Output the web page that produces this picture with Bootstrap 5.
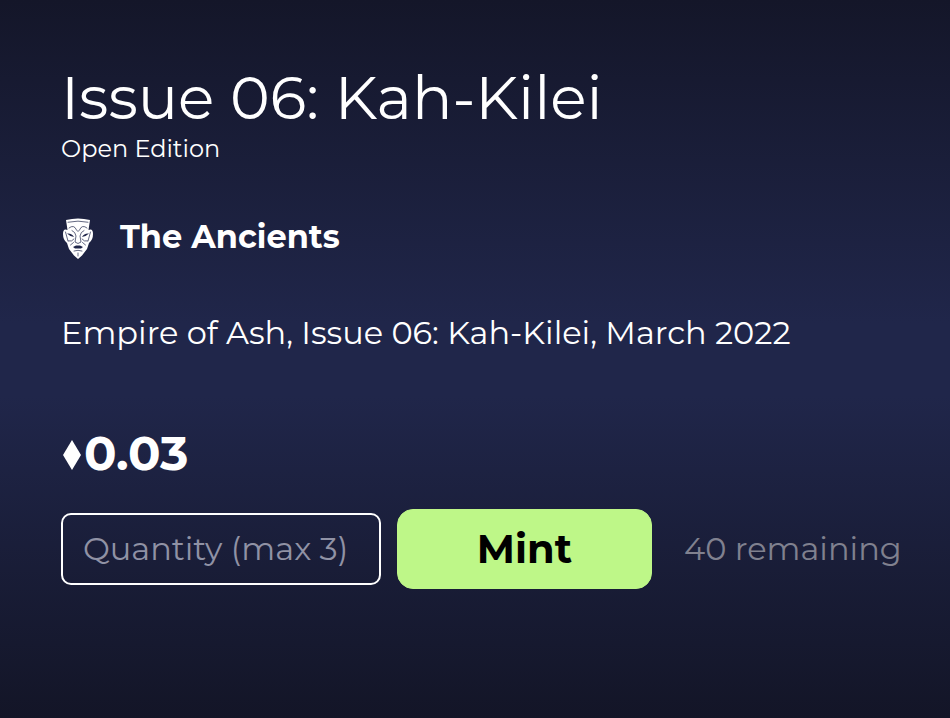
<!DOCTYPE html>
<html lang="en">
<head>
<meta charset="utf-8">
<meta name="viewport" content="width=device-width, initial-scale=1">
<title>Issue 06: Kah-Kilei</title>
<link href="https://cdn.jsdelivr.net/npm/bootstrap@5.3.0/dist/css/bootstrap.min.css" rel="stylesheet">
<style>
  body {
    background: linear-gradient(#141629, #20264a 45%, #20264a 55%, #131527);
    color: #fff;
    font-family: Montserrat, Inter, "Open Sans", sans-serif;
  }
  .mint-panel { padding: 64px 48px 64px 61px; }
  .issue-title { font-size: 60px; line-height: 68px; font-weight: 400; }
  .edition { font-size: 24px; line-height: 34px; }
  .artist { font-size: 32px; line-height: 48px; gap: 26px; margin-top: 47px; }
  .artist:hover { color: #bef788; }
  .summary { font-size: 32px; line-height: 48px; margin-top: 48px; }
  .price { font-size: 48px; line-height: 64px; margin-top: 64px; gap: 3px; }
  .mint-row { gap: 16px; margin-top: 24px; }
  .qty-field { flex: 0 1 320px; min-width: 0; }
  .qty-input, .qty-input:focus {
    height: 72px; padding: 0 20px 2px; font-size: 32px; line-height: 48px;
    color: #fff; background: transparent; border: 2px solid #fff; border-radius: 10px;
  }
  .qty-input::placeholder { color: #9092a5; opacity: 1; }
  .mint-btn {
    flex: 0 1 255px; height: 80px; font-size: 40px; line-height: 48px; border-radius: 16px;
    --bs-btn-bg: #bef788; --bs-btn-color: #000; --bs-btn-border-color: #bef788;
    --bs-btn-hover-bg: #adea74; --bs-btn-hover-color: #000;
  }
  .remaining { font-size: 32px; color: #80818f; margin-left: 16px; }
</style>
</head>
<body class="min-vh-100">
<main class="mint-panel">
  <h1 class="issue-title mb-0">Issue 06: Kah-Kilei</h1>
  <p class="edition mb-0">Open Edition</p>

  <a href="#" class="artist d-flex align-items-center fw-bold text-white text-decoration-none">
    <svg class="mt-1" width="33" height="42" viewBox="0 0 33 42" aria-hidden="true">
      <path fill="#fff" d="M5 2Q17-1 29 2L27.500 12Q32 10 32 16Q32 22 28 25L26 31L21 37.500L17 41L13 37.500L8 31L6 25Q2 22 2 16Q2 10 6.500 12Z"/>
      <g fill="none" stroke="#20264a" stroke-width=".7" stroke-linecap="round">
        <path d="M7 4.200Q17 2 27 4.200"/>
        <path d="M8 10Q13 6 15.500 12Q17 15 18.500 12Q21 6 26 10M11 12.500Q14.500 14 15 18L14 24Q17 27 20 24L19 18Q19.500 14 23 12.500"/>
        <path d="M4.500 14L7 23M29.500 14L27 23M7.500 23Q11 24 13 21M26.500 23Q23 24 21 21M9.500 27L12.500 24.500M24.500 27L21.500 24.500M13 33Q17 31.500 21 33M17 35V38"/>
      </g>
      <path fill="#20264a" d="M6 15.500Q11 15 13 19Q9 18.500 6 15.500ZM28 15.500Q23 15 21 19Q25 18.500 28 15.500ZM12 29L15 27.500H19L22 29L20 30.500H14Z"/>
    </svg>
    <span>The Ancients</span>
  </a>

  <p class="summary mb-0">Empire of Ash, Issue 06: Kah-Kilei, March 2022</p>

  <p class="price fw-bold d-flex align-items-center mb-0">
    <svg class="mt-1" width="20" height="32" viewBox="0 0 20 32" aria-hidden="true"><path fill="#fff" d="M11 1L20 16L11 31L2 16Z"/></svg>
    <span>0.03</span>
  </p>

  <form class="mint-row d-flex align-items-center">
    <div class="qty-field">
      <label for="quantity" class="visually-hidden">Quantity</label>
      <input id="quantity" type="text" inputmode="numeric" class="form-control qty-input" placeholder="Quantity (max 3)">
    </div>
    <button type="button" class="btn mint-btn fw-bold">Mint</button>
    <span class="remaining text-nowrap">40 remaining</span>
  </form>
</main>
<script src="https://cdn.jsdelivr.net/npm/bootstrap@5.3.0/dist/js/bootstrap.bundle.min.js"></script>
</body>
</html>
